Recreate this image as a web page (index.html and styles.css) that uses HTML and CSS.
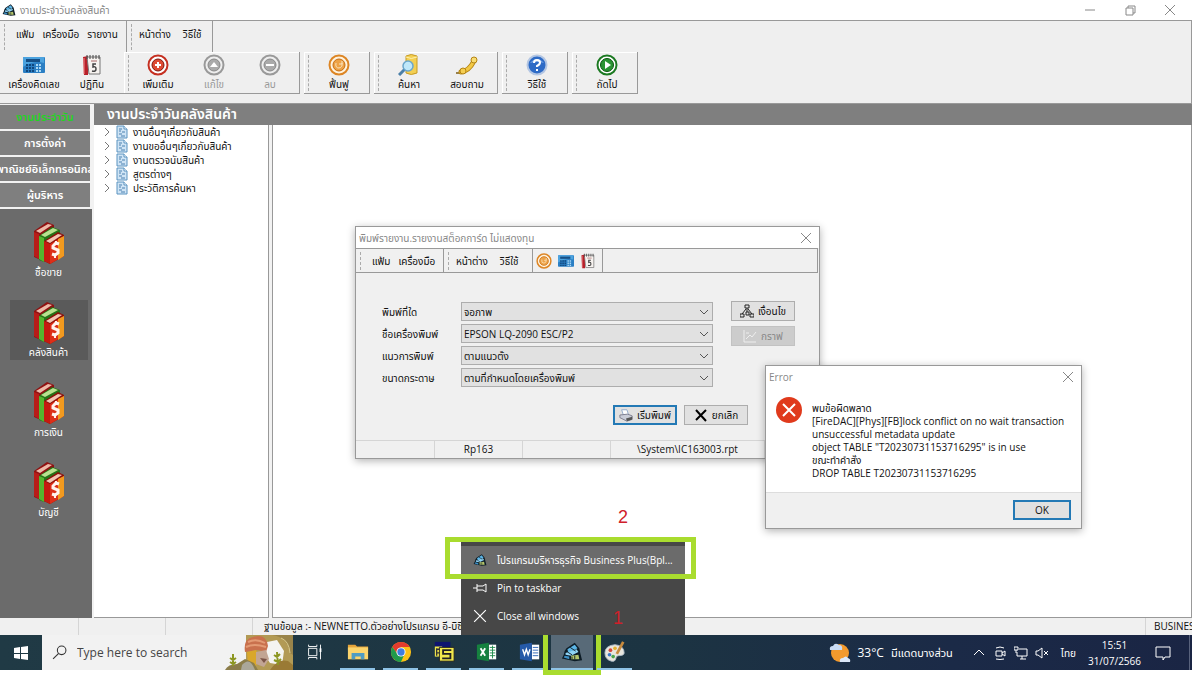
FILE: index.html
```html
<!DOCTYPE html>
<html lang="th">
<head>
    <meta charset="UTF-8">
    <meta name="viewport" content="width=device-width, initial-scale=1.0">
    <title>งานประจำวันคลังสินค้า</title>
    <link rel="stylesheet" href="styles.css">
</head>
<body>
    <!-- Shared icons -->
    <svg class="symbols" aria-hidden="true">
        <symbol id="i-app" viewBox="0 0 24 24">
            <path d="M6 8L15 2l5 6 1 5 2 8-8 1-14-3 2-4 1-4z" fill="#0d1c26"/>
            <path d="M7 9l8-5 3 4-10 5z" fill="#5bb5e6"/>
            <path d="M5 13l3-1 9-3 2 3-8 4-6-1z" fill="#8fd3f4"/>
            <path d="M4 16l5 1v3l-6-2z" fill="#3d8fc4"/>
            <path d="M11 16l8-1 1 5h-9z" fill="#b4c56c"/>
            <path d="M10 7l6 4M12 17v3M15 16v4M7 12l5 3" stroke="#0d1c26"/>
        </symbol>
        <symbol id="i-calc" viewBox="0 0 22 18">
            <rect x="0" y="1" width="22" height="16" rx="1" fill="#2b7fc4"/>
            <path d="M0 2q0-1 1-1h20v6q-10-3-21 4z" fill="#4ca3df"/>
            <rect x="3" y="3" width="14" height="3" fill="#174f85"/>
            <path d="M3 8h2v2H3zM6 8h2v2H6zM9 8h2v2H9zM3 11h2v2H3zM6 11h2v2H6zM9 11h2v2H9zM3 14h2v2H3zM6 14h2v2H6zM9 14h2v2H9z" fill="#10477d"/>
            <path d="M13 8h2v2h-2zM16 8h2v2h-2zM13 11h2v2h-2zM16 11h2v2h-2zM13 14h2v2h-2zM16 14h2v2h-2z" fill="#a9d8f5"/>
        </symbol>
        <symbol id="i-cal" viewBox="0 0 20 22">
            <path d="M1 3l5-1v19H2z" fill="#b8202a"/>
            <path d="M2 4v16" stroke="#e88"/>
            <path d="M5 3h13v17H7z" fill="#f7f3f0" stroke="#777"/>
            <path d="M5 1v4M8 1v4M11 1v4M14 1v4M17 1v4" stroke="#444"/>
            <path d="M9 7h6" stroke="#a66"/>
            <path d="M14 10h-3v3q3-1 3 2t-4 2" fill="none" stroke="#444" stroke-width="1.5"/>
        </symbol>
        <symbol id="i-add" viewBox="0 0 22 22">
            <circle cx="11" cy="11" r="9.500" fill="#fff" stroke="#c52f20" stroke-width="2"/>
            <circle cx="11" cy="11" r="6" fill="#dd4a33" stroke="#7d160c"/>
            <path d="M11 8v6M8 11h6" stroke="#fff" stroke-width="2"/>
        </symbol>
        <symbol id="i-edit" viewBox="0 0 22 22">
            <circle cx="11" cy="11" r="9.500" fill="#eee" stroke="#999" stroke-width="2"/>
            <circle cx="11" cy="11" r="6" fill="#aaa" stroke="#888"/>
            <path d="M7 13l4-5 4 5z" fill="#fff"/>
        </symbol>
        <symbol id="i-del" viewBox="0 0 22 22">
            <circle cx="11" cy="11" r="9.500" fill="#eee" stroke="#999" stroke-width="2"/>
            <circle cx="11" cy="11" r="6" fill="#aaa" stroke="#888"/>
            <path d="M7 11h8" stroke="#fff" stroke-width="2"/>
        </symbol>
        <symbol id="i-refresh" viewBox="0 0 22 22">
            <circle cx="11" cy="11" r="9.500" fill="#fff3dd" stroke="#dd8524" stroke-width="2"/>
            <circle cx="11" cy="11" r="6" fill="#eda246" stroke="#c76c12"/>
            <path d="M8 9q-1 5 3 5 4-1 3-5M14 7v3h-3" fill="none" stroke="#fbe3bd" stroke-width="1"/>
        </symbol>
        <symbol id="i-find" viewBox="0 0 22 22">
            <path d="M8 2q5-3 11 0v17q-6 3-11 0z" fill="#f3cf52" stroke="#c79b25"/>
            <path d="M8 3q5 3 11 0" fill="none" stroke="#fdf0b0"/>
            <path d="M1 21l6-6" stroke="#4a7fa8" stroke-width="3"/>
            <circle cx="10" cy="12" r="5" fill="#bfe8fa" stroke="#6aa6cc" stroke-width="1.5"/>
        </symbol>
        <symbol id="i-phone" viewBox="0 0 22 22">
            <path d="M0 19h5" fill="none" stroke="#7c5c14" stroke-width="1.5"/>
            <path d="M5 18q8-1 13-11" fill="none" stroke="#b48413" stroke-width="5" stroke-linecap="round"/>
            <path d="M5 18q8-1 13-11" fill="none" stroke="#f2c844" stroke-width="3" stroke-linecap="round"/>
            <circle cx="18" cy="6" r="3" fill="#f8dc72" stroke="#b48413"/>
            <circle cx="7" cy="17" r="3" fill="#f4ce52" stroke="#b48413"/>
        </symbol>
        <symbol id="i-help" viewBox="0 0 22 22">
            <circle cx="11" cy="11" r="9.500" fill="#2e6bc6" stroke="#b3c6e3" stroke-width="2"/>
            <path d="M4 9q7-8 14 0-7-2-14 0z" fill="#6fa0e4"/>
            <path d="M8 9q0-3 3-3t3 2.500q0 2-3 3.500v1M11 15v2" fill="none" stroke="#fff" stroke-width="2"/>
        </symbol>
        <symbol id="i-next" viewBox="0 0 22 22">
            <circle cx="11" cy="11" r="9.500" fill="#fff" stroke="#1c7a22" stroke-width="2"/>
            <circle cx="11" cy="11" r="6.500" fill="#2b9433" stroke="#0a5510"/>
            <path d="M9 7l6 4-6 4z" fill="#fff"/>
        </symbol>
        <symbol id="i-books" viewBox="0 0 32 42">
            <path d="M1 9L14 0l7 3v8L8 38l-7-3z" fill="#8e1212"/>
            <path d="M1 10l5 2v25l-5-3z" fill="#b81c18"/>
            <path d="M3 9l12-7 4 1L7 11z" fill="#eeb9a8"/>
            <path d="M6 14l13-9 8 3v8L11 40l-5-2z" fill="#257317"/>
            <path d="M6 14l5 2v24l-5-3z" fill="#55b52e"/>
            <path d="M8 13l12-7 5 2-13 7z" fill="#b8e18f"/>
            <path d="M11 19l14-9 6 3v21l-14 8-6-3z" fill="#8a1009"/>
            <path d="M11 19l6 3v20l-6-3z" fill="#c51a10"/>
            <path d="M13 19l12-7 4 1-12 8z" fill="#f4c4b2"/>
            <path d="M17 22l14-8v20l-14 8z" fill="#dc2f18"/>
            <path d="M25 17l6-3v20l-6 4z" fill="#f29a1f"/>
            <path d="M26 22l-3-1-3 3v2l5 2v3l-3 2-3-1" fill="none" stroke="#fff4ee" stroke-width="3"/>
            <path d="M23 19v3M22 33v3" stroke="#fff4ee" stroke-width="2"/>
        </symbol>
        <symbol id="i-doc" viewBox="0 0 12 14">
            <path d="M1 1h7l3 3v9H1z" fill="#cfe4f5" stroke="#5b93c0"/>
            <path d="M8 1v3h3" fill="#fff" stroke="#5b93c0"/>
            <path d="M3 4h3M3 6h2M6 7h3M3 9h3M5 11h4" stroke="#4a80b0"/>
        </symbol>
        <symbol id="i-x" viewBox="0 0 12 12">
            <path d="M1 1l10 10M11 1L1 11" stroke="currentColor" fill="none"/>
        </symbol>
        <symbol id="i-down" viewBox="0 0 10 6">
            <path d="M1 1l4 4 4-4" stroke="currentColor" fill="none"/>
        </symbol>
    </svg>

    <div class="desktop">
        <header class="titlebar">
            <svg class="titlebar-icon"><use href="#i-app"/></svg>
            <span class="titlebar-text">งานประจำวันคลังสินค้า</span>
            <div class="window-controls">
                <button aria-label="Minimize"><svg viewBox="0 0 12 12"><path d="M1 6h10" stroke="currentColor"/></svg></button>
                <button aria-label="Restore"><svg viewBox="0 0 12 12"><path d="M2 4h7v7H2zM4 4V2h7v7H9" stroke="currentColor" fill="none"/></svg></button>
                <button aria-label="Close"><svg><use href="#i-x"/></svg></button>
            </div>
        </header>

        <div class="toolbars">
            <nav class="menu-row">
                <div class="menu-group">
                    <button>แฟ้ม</button>
                    <button>เครื่องมือ</button>
                    <button>รายงาน</button>
                </div>
                <div class="menu-group">
                    <button>หน้าต่าง</button>
                    <button>วิธีใช้</button>
                </div>
            </nav>
            <div class="tool-row">
                <div class="tool-group tool-group-first">
                    <button><svg><use href="#i-calc"/></svg>เครื่องคิดเลข</button>
                    <button><svg><use href="#i-cal"/></svg>ปฏิทิน</button>
                </div>
                <div class="tool-group tool-group-edit">
                    <button><svg><use href="#i-add"/></svg>เพิ่มเติม</button>
                    <button disabled><svg><use href="#i-edit"/></svg>แก้ไข</button>
                    <button disabled><svg><use href="#i-del"/></svg>ลบ</button>
                </div>
                <div class="tool-group">
                    <button><svg><use href="#i-refresh"/></svg>ฟื้นฟู</button>
                </div>
                <div class="tool-group">
                    <button><svg><use href="#i-find"/></svg>ค้นหา</button>
                    <button><svg><use href="#i-phone"/></svg>สอบถาม</button>
                </div>
                <div class="tool-group">
                    <button><svg><use href="#i-help"/></svg>วิธีใช้</button>
                </div>
                <div class="tool-group">
                    <button><svg><use href="#i-next"/></svg>ถัดไป</button>
                </div>
            </div>
        </div>

        <div class="workspace">
            <aside class="sidebar">
                <button class="side-tab active">งานประจำวัน</button>
                <button class="side-tab">การตั้งค่า</button>
                <button class="side-tab"><span>พาณิชย์อิเล็กทรอนิกส์</span></button>
                <button class="side-tab">ผู้บริหาร</button>
                <div class="side-list">
                    <button class="side-item"><svg><use href="#i-books"/></svg>ซื้อขาย</button>
                    <button class="side-item selected"><svg><use href="#i-books"/></svg>คลังสินค้า</button>
                    <button class="side-item"><svg><use href="#i-books"/></svg>การเงิน</button>
                    <button class="side-item"><svg><use href="#i-books"/></svg>บัญชี</button>
                </div>
            </aside>
            <main class="main">
                <h1 class="main-title">งานประจำวันคลังสินค้า</h1>
                <div class="panes">
                    <ul class="tree">
                        <li><svg class="arrow"><use href="#i-down"/></svg><svg class="doc"><use href="#i-doc"/></svg>งานอื่นๆเกี่ยวกับสินค้า</li>
                        <li><svg class="arrow"><use href="#i-down"/></svg><svg class="doc"><use href="#i-doc"/></svg>งานขออื่นๆเกี่ยวกับสินค้า</li>
                        <li><svg class="arrow"><use href="#i-down"/></svg><svg class="doc"><use href="#i-doc"/></svg>งานตรวจนับสินค้า</li>
                        <li><svg class="arrow"><use href="#i-down"/></svg><svg class="doc"><use href="#i-doc"/></svg>สูตรต่างๆ</li>
                        <li><svg class="arrow"><use href="#i-down"/></svg><svg class="doc"><use href="#i-doc"/></svg>ประวัติการค้นหา</li>
                    </ul>
                    <div class="content"></div>
                </div>
            </main>
        </div>

        <footer class="statusbar">
            <span class="cell"></span>
            <span class="cell"></span>
            <span class="cell"></span>
            <span class="cell cell-db">ฐานข้อมูล :- NEWNETTO.ตัวอย่างโปรแกรม อี-บิซิ</span>
            <span class="cell cell-name">BUSINESS</span>
        </footer>

        <div class="taskbar">
            <button class="start" aria-label="Start">
                <svg viewBox="0 0 14 14"><path d="M0 2l6-1v6H0zM7 1l7-1v7H7zM0 8h6v5l-6-1zM7 8h7v6l-7-1z" fill="#fff"/></svg>
            </button>
            <label class="search">
                <svg class="search-icon" viewBox="0 0 14 14"><circle cx="9" cy="5" r="4" fill="none" stroke="#333"/><path d="M6 8l-5 5" stroke="#333"/></svg>
                <input type="text" placeholder="Type here to search" aria-label="Type here to search">
                <svg class="search-art" viewBox="0 0 68 35">
                    <path d="M21 35V0h47v35z" fill="#b29a55"/>
                    <path d="M0 35h21V0H0z" fill="#f2f2f2"/>
                    <path d="M42 7l10-2 7 11-2 14-12-2-8-12z" fill="#f4f4f1"/>
                    <path d="M47 0q16 2 18 18l3 2V0z" fill="#99844a"/>
                    <path d="M56 3q8 3 9 15" stroke="#d8c98c" fill="none"/>
                    <path d="M20 17Q18 4 28 2q13-4 15 9l-2 6-8-2z" fill="#c9714d"/>
                    <path d="M23 7q8-4 17 1M21 12q8-4 20 0" stroke="#e39b74" fill="none" stroke-width="2"/>
                    <path d="M22 17l9-2 4 7-4 9-8-2z" fill="#d9a72b"/>
                    <path d="M31 17l10-2 3 9-5 8-8-3z" fill="#c2a593"/>
                    <path d="M35 23l7 1-3 4z" fill="#7b5548"/>
                    <path d="M0 35q3-6 12-6l8-5 9 4 4 7z" fill="#8b7d4a"/>
                    <path d="M17 30q8-9 13 5H16z" fill="#aaa799"/>
                    <path d="M45 35q8-12 18-9l5 4v5z" fill="#9a7a35"/>
                    <path d="M8 31V19M5 23l3 2 3-2M5 27l3 2 3-2M53 30l-1-13M49 20l3 2 3-3M49 25l4 2 3-3" stroke="#8d9722" stroke-width="2" fill="none"/>
                </svg>
            </label>
            <div class="tasks">
                <button aria-label="Task View">
                    <svg viewBox="0 0 24 24"><path d="M5 8h9v8H5zM5 4v2h9V4M5 20v-2h9v2M18 4v16" fill="none" stroke="#fff"/><path d="M17 8h2v4h-2z" fill="#fff"/></svg>
                </button>
                <button class="running" aria-label="File Explorer">
                    <svg viewBox="0 0 24 24"><path d="M1 4h8l2 2h12v4H1z" fill="#e5a43a"/><path d="M1 7h22v13H1z" fill="#fbd46c"/><path d="M5 20v-7h14v7h-4v-3H9v3z" fill="#4f9cc3"/></svg>
                </button>
                <button class="running" aria-label="Google Chrome">
                    <svg viewBox="0 0 24 24"><circle cx="12" cy="12" r="11" fill="#fbc116"/><path d="M2.500 6.500A11 11 0 0 1 21.500 6.500H12l-4 7.500z" fill="#e33b2e"/><path d="M2.500 6.500A11 11 0 0 0 12 23l4-9H8z" fill="#219a4c"/><circle cx="12" cy="12" r="5" fill="#fff"/><circle cx="12" cy="12" r="4" fill="#3f7de0"/></svg>
                </button>
                <button class="running" aria-label="Server">
                    <svg viewBox="0 0 24 24"><path d="M2 1h17v6H2z" fill="#0e1470"/><path d="M2 6h8v11H2z" fill="#f1e84c"/><path d="M4 9h4M4 13h4M4 8v8" stroke="#333" stroke-width="1.500"/><path d="M7 7h16v15H7z" fill="#f1e84c" stroke="#222"/><path d="M20 10h-9v4h8v5h-9" fill="none" stroke="#222" stroke-width="2"/></svg>
                </button>
                <button class="running" aria-label="Excel">
                    <svg viewBox="0 0 24 24"><path d="M14 4h8v16h-8z" fill="#fff"/><path d="M15 7h6M15 10h6M15 13h6M15 16h6M18 5v14" stroke="#1d8a4b"/><path d="M1 4l13-2v20L1 20z" fill="#16813f"/><path d="M5 8l5 8M10 8l-5 8" stroke="#fff" stroke-width="2"/></svg>
                </button>
                <button class="running" aria-label="Word">
                    <svg viewBox="0 0 24 24"><path d="M14 4h8v16h-8z" fill="#fff"/><path d="M15 7h6M15 10h6M15 13h6M15 16h6" stroke="#2a62b4"/><path d="M1 4l13-2v20L1 20z" fill="#255aa8"/><path d="M4 9l2 6 2-6 2 6 2-6" stroke="#fff" stroke-width="1.500" fill="none"/></svg>
                </button>
                <button class="current" aria-label="Business Plus">
                    <svg><use href="#i-app"/></svg>
                    <span class="mark"></span>
                </button>
                <button class="running" aria-label="Paint">
                    <svg viewBox="0 0 24 24"><path d="M1 13Q1 5 12 4q10 1 10 9 0 3-6 3-3 0-3 3-1 4-5 3-7-2-7-9z" fill="#e9e6de" stroke="#a9b7c4"/><circle cx="7" cy="10" r="2" fill="#d4473b"/><circle cx="12" cy="8" r="2" fill="#e4b233"/><circle cx="6" cy="15" r="2" fill="#3c78c8"/><circle cx="10" cy="17" r="2" fill="#4ca64c"/><path d="M21 1l-7 13" stroke="#c78a3d" stroke-width="3"/></svg>
                </button>
            </div>
            <div class="tray">
                <svg class="weather" viewBox="0 0 22 22"><circle cx="11" cy="11" r="9" fill="#f39a2d"/><path d="M1 8q-1-4 3-4 2-4 6-1 4 0 3 5z" fill="#c9dcf5"/><path d="M11 20q-1-4 3-4 3-3 5 0 3 1 2 4z" fill="#dce8f8"/></svg>
                <span class="temp">33°C</span>
                <span class="forecast">มีแดดบางส่วน</span>
                <svg class="tray-icon" viewBox="0 0 14 14"><path d="M2 9l5-5 5 5" fill="none" stroke="#fff"/></svg>
                <svg class="tray-icon" viewBox="0 0 14 14"><path d="M3 5h6v5H3zM9 7l3-2v5l-3-2M3 2q4-2 8 0M3 13q4 1 8 0" fill="none" stroke="#fff"/></svg>
                <svg class="tray-icon" viewBox="0 0 14 14"><path d="M5 3h8v7H3V6M6 13h6M8 10v3M0 1h4v3H0zM2 4v3" fill="none" stroke="#fff"/></svg>
                <svg class="tray-icon" viewBox="0 0 14 14"><path d="M1 5h2l4-3v10L3 9H1zM9 5l4 4M13 5L9 9" fill="none" stroke="#fff"/></svg>
                <span class="lang">ไทย</span>
                <span class="clock">15:51<br>31/07/2566</span>
                <svg class="notify" viewBox="0 0 16 16"><path d="M1 2h14v10h-5l-2 3v-3H1z" fill="none" stroke="#fff"/></svg>
            </div>
        </div>

        <!-- Report printing window -->
        <section class="window print-window">
            <div class="window-title">
                <span>พิมพ์รายงาน.รายงานสต็อกการ์ด ไม่แสดงทุน</span>
                <button class="close" aria-label="Close"><svg><use href="#i-x"/></svg></button>
            </div>
            <nav class="print-menu">
                <div class="print-group"><button>แฟ้ม</button><button>เครื่องมือ</button></div>
                <div class="print-group"><button>หน้าต่าง</button><button>วิธีใช้</button></div>
                <div class="print-icons">
                    <button aria-label="Refresh"><svg><use href="#i-refresh"/></svg></button>
                    <button aria-label="Calculator"><svg><use href="#i-calc"/></svg></button>
                    <button aria-label="Calendar"><svg><use href="#i-cal"/></svg></button>
                </div>
            </nav>
            <form class="print-form">
                <div class="fields">
                    <label for="target">พิมพ์ที่ใด</label>
                    <div class="select"><select id="target"><option>จอภาพ</option></select><svg><use href="#i-down"/></svg></div>
                    <label for="printer">ชื่อเครื่องพิมพ์</label>
                    <div class="select"><select id="printer"><option>EPSON LQ-2090 ESC/P2</option></select><svg><use href="#i-down"/></svg></div>
                    <label for="orient">แนวการพิมพ์</label>
                    <div class="select"><select id="orient"><option>ตามแนวตั้ง</option></select><svg><use href="#i-down"/></svg></div>
                    <label for="paper">ขนาดกระดาษ</label>
                    <div class="select"><select id="paper"><option>ตามที่กำหนดโดยเครื่องพิมพ์</option></select><svg><use href="#i-down"/></svg></div>
                </div>
                <div class="side-buttons">
                    <button type="button" class="btn">
                        <svg viewBox="0 0 14 14"><path d="M5 1h4v3H5zM0 10h4v3H0zM10 10h4v3h-4zM6 8h3v3H6zM7 4v4M6 5L2 10M8 5l4 5" fill="none" stroke="#222"/></svg>เงื่อนไข
                    </button>
                    <button type="button" class="btn" disabled>
                        <svg viewBox="0 0 14 14"><path d="M1 1v12h12M3 10l4-4 2 2 4-5M3 4h3" fill="none" stroke="#eee"/></svg>กราฟ
                    </button>
                </div>
                <div class="actions">
                    <button type="button" class="btn primary">
                        <svg viewBox="0 0 16 14"><path d="M3 1h6l2 6H5z" fill="#fff" stroke="#8aa6c8"/><path d="M1 7l9-1 5 2v4l-6 2-8-4z" fill="#c9cdd8" stroke="#778"/><path d="M8 11l7-2v3l-6 2z" fill="#555"/></svg>เริ่มพิมพ์
                    </button>
                    <button type="button" class="btn">
                        <svg viewBox="0 0 14 14"><path d="M2 2l10 11M12 2L2 12" stroke="#000" stroke-width="2"/></svg>ยกเลิก
                    </button>
                </div>
            </form>
            <div class="print-status">
                <span></span><span>Rp163</span><span></span><span>\System\IC163003.rpt</span><span></span>
            </div>
        </section>

        <!-- Error message -->
        <section class="window error-window" role="alertdialog">
            <div class="window-title">
                <span>Error</span>
                <button class="close" aria-label="Close"><svg><use href="#i-x"/></svg></button>
            </div>
            <div class="error-body">
                <svg viewBox="0 0 26 26"><circle cx="13" cy="13" r="13" fill="#e03a1c"/><path d="M7 7l12 12M19 7L7 19" stroke="#fff" stroke-width="2"/></svg>
                <p>พบข้อผิดพลาด<br>[FireDAC][Phys][FB]lock conflict on no wait transaction<br>unsuccessful metadata update<br>object TABLE "T20230731153716295" is in use<br>ขณะทำคำสั่ง<br>DROP TABLE T20230731153716295</p>
            </div>
            <div class="error-footer"><button class="btn primary">OK</button></div>
        </section>

        <!-- Jump list of the running program -->
        <div class="jump-list">
            <button class="hover"><svg><use href="#i-app"/></svg>โปรแกรมบริหารธุรกิจ Business Plus(Bpl...</button>
            <button><svg viewBox="0 0 14 14"><path d="M0 7h4M4 3v8M4 5h6l3-2v8l-3-2H4" fill="none" stroke="#fff"/></svg>Pin to taskbar</button>
            <button><svg><use href="#i-x"/></svg>Close all windows</button>
            <span class="mark"></span>
            <span class="step step-one">1</span>
            <span class="step step-two">2</span>
        </div>
    </div>
</body>
</html>
```
FILE: styles.css
```css
* {
    box-sizing: border-box;
}
body {
    margin: 0;
    padding: 0 9px 28px 0;
    background: #fff;
    color: #111;
    font-family: "Open Sans", "Noto Sans", "Noto Sans Thai", sans-serif;
    font-size: 10px;
    line-height: 14px;
}
button, input, select {
    font: inherit;
    color: inherit;
}
button {
    padding: 0;
    border: 0;
    background: none;
    white-space: nowrap;
}
svg {
    flex: none;
    display: block;
}
.symbols {
    position: absolute;
    width: 0;
    height: 0;
}
.desktop {
    position: relative;
    display: flex;
    flex-direction: column;
    height: calc(100vh - 28px);
    min-height: 560px;
}

/* Main window */
.titlebar {
    display: flex;
    align-items: center;
    height: 20px;
    padding: 0 16px 0 2px;
    color: #888;
}
.titlebar-icon {
    width: 14px;
    height: 14px;
}
.titlebar-text {
    margin-left: 4px;
}
.window-controls {
    display: flex;
    gap: 28px;
    margin-left: auto;
}
.window-controls svg {
    width: 12px;
    height: 12px;
}
.toolbars {
    height: 84px;
    border: 1px solid #999;
    border-left: 0;
    background: #efefef;
}
.menu-row {
    display: flex;
    height: 31px;
}
.menu-group {
    display: flex;
    align-items: center;
    gap: 8px;
    padding: 0 8px 6px 16px;
    border-right: 1px solid #999;
    position: relative;
}
.menu-group:first-child {
    width: 127px;
}
.menu-group:last-child {
    width: 86px;
    gap: 12px;
    padding-left: 12px;
}
.menu-group::before, .tool-group::before, .print-group::before {
    content: "";
    position: absolute;
    left: 4px;
    top: 3px;
    bottom: 2px;
    border-left: 1px dashed #aaa;
}
.tool-row {
    display: flex;
    gap: 4px;
    height: 42px;
}
.tool-group {
    position: relative;
    display: flex;
    padding: 0 1px 0 6px;
    border-right: 1px solid #999;
    border-bottom: 1px solid #999;
    box-shadow: inset 1px 1px #fff;
}
.tool-group-first {
    padding: 0 3px 0 5px;
    margin-right: -5px;
    box-shadow: none;
}
.tool-group-first::before {
    display: none;
}
.tool-group button {
    display: flex;
    flex-direction: column;
    align-items: center;
    justify-content: flex-end;
    gap: 1px;
    width: 58px;
    padding-bottom: 2px;
}
.tool-group-edit button {
    width: 56px;
}
.tool-group button:disabled {
    color: #999;
}
.tool-group svg {
    width: 22px;
    height: 22px;
}
.workspace {
    flex: 1;
    display: flex;
    gap: 2px;
    min-height: 0;
    background: #f2f2f2;
}
.sidebar {
    display: flex;
    flex-direction: column;
    gap: 2px;
    width: 92px;
    padding-top: 1px;
}
.side-tab {
    height: 24px;
    margin-right: 2px;
    display: flex;
    align-items: center;
    justify-content: center;
    overflow: hidden;
    background: #7f7f7f;
    color: #fff;
    font-size: 11px;
    font-weight: 600;
}
.side-tab.active {
    color: #1fd51f;
}
.side-list {
    flex: 1;
    display: flex;
    flex-direction: column;
    align-items: center;
    gap: 20px;
    padding: 11px 0 0 5px;
    background: #6b6b6b;
    color: #fff;
}
.side-item {
    display: flex;
    flex-direction: column;
    align-items: center;
    width: 78px;
    height: 60px;
    padding-top: 2px;
    gap: 1px;
}
.side-item.selected {
    background: #5a5a5a;
}
.side-item svg {
    width: 32px;
    height: 42px;
}
.main {
    flex: 1;
    display: flex;
    flex-direction: column;
    min-width: 0;
}
.main-title {
    height: 21px;
    margin: 0;
    padding-left: 13px;
    background: #7f7f7f;
    color: #fff;
    font-size: 14px;
    font-weight: 600;
    line-height: 20px;
}
.panes {
    flex: 1;
    display: flex;
    gap: 3px;
}
.tree {
    width: 175px;
    margin: 0;
    padding: 0 0 0 8px;
    list-style: none;
    background: #fff;
    border: solid #999;
    border-width: 0 1px 1px 0;
}
.tree li {
    display: flex;
    align-items: center;
    height: 14px;
}
.tree .arrow {
    width: 10px;
    height: 6px;
    color: #777;
    transform: rotate(-90deg);
}
.tree .doc {
    width: 12px;
    height: 14px;
    margin: 0 5px 0 4px;
}
.content {
    flex: 1;
    background: #fff;
    border: solid #999;
    border-width: 0 1px 1px 1px;
}
.statusbar {
    display: flex;
    height: 17px;
    overflow: hidden;
    background: #f0f0f0;
    line-height: 17px;
    white-space: nowrap;
}
.cell {
    flex: 0 0 87px;
    border-right: 1px solid #d5d5d5;
}
.cell:first-child {
    flex-basis: 79px;
}
.cell-db {
    flex: 1;
    padding-left: 11px;
}
.cell-name {
    flex: 0 0 46px;
    min-width: 0;
    padding-left: 8px;
    border: 0;
    overflow: hidden;
}

/* Taskbar */
.taskbar {
    display: flex;
    height: 35px;
    background: linear-gradient(90deg, #203a45 0%, #1c3442 55%, #1b2a47 80%, #1a2544 100%);
    color: #fff;
}
.start {
    width: 42px;
}
.start svg {
    width: 14px;
    height: 14px;
    margin: auto;
}
.search {
    display: flex;
    align-items: center;
    width: 251px;
    padding-left: 10px;
    background: #f2f2f2;
}
.search-icon {
    width: 15px;
    height: 15px;
}
.search input {
    flex: 1;
    min-width: 0;
    margin-left: 10px;
    padding: 0;
    border: 0;
    background: none;
    color: #444;
    font-size: 12px;
}
.search input::placeholder {
    color: #444;
}
.search-art {
    width: 68px;
    height: 35px;
}
.tasks {
    display: flex;
    gap: 8px;
    padding-left: 4px;
}
.tasks button {
    position: relative;
    display: flex;
    align-items: center;
    justify-content: center;
    width: 35px;
    border-bottom: 2px solid transparent;
}
.tasks .running {
    border-color: #8fc3e6;
}
.tasks button.current {
    width: 42px;
    margin: 0 -4px;
    background: #586a78;
    border-color: #8fc3e6;
}
.tasks svg {
    width: 22px;
    height: 22px;
}
.tray {
    display: flex;
    align-items: center;
    gap: 7px;
    margin-left: auto;
    padding-right: 18px;
    border-right: 1px solid #58627c;
    margin-right: 2px;
    white-space: nowrap;
}
.weather {
    width: 22px;
    height: 22px;
}
.temp {
    font-size: 12px;
}
.forecast {
    margin-right: 12px;
    font-size: 11px;
}
.tray-icon {
    width: 14px;
    height: 14px;
}
.lang {
    margin-left: 5px;
}
.clock {
    margin: 0 7px 0 5px;
    line-height: 16px;
    text-align: center;
}
.notify {
    width: 16px;
    height: 16px;
}

/* Floating windows */
.window {
    position: absolute;
    background: #f0f0f0;
    border: 1px solid #999;
    box-shadow: 0 2px 8px rgba(0, 0, 0, 0.3);
}
.window-title {
    display: flex;
    justify-content: space-between;
    align-items: center;
    height: 21px;
    padding: 0 7px 0 3px;
    background: #fff;
    color: #888;
}
.close svg {
    width: 12px;
    height: 12px;
}
.btn {
    display: flex;
    align-items: center;
    justify-content: center;
    gap: 4px;
    width: 64px;
    height: 20px;
    background: #e1e1e1;
    border: 1px solid #adadad;
}
.btn:disabled {
    background: #ccc;
    border-color: #c2c2c2;
    color: #888;
}
.btn.primary {
    border: 2px solid #2379b5;
}
.btn svg {
    width: 14px;
    height: 14px;
}
.print-window {
    left: 355px;
    top: 226px;
    width: 465px;
}
.print-menu {
    display: flex;
    height: 25px;
    margin-right: 1px;
    border: 1px solid #999;
    border-left: 0;
}
.print-group {
    position: relative;
    display: flex;
    align-items: center;
    gap: 8px;
    width: 88px;
    padding-left: 16px;
    border-right: 1px solid #999;
}
.print-group + .print-group {
    width: 89px;
    padding-left: 12px;
    gap: 12px;
}
.print-icons {
    display: flex;
    align-items: center;
    gap: 6px;
    width: 70px;
    padding-left: 3px;
    border-right: 1px solid #999;
}
.print-icons svg {
    width: 16px;
    height: 16px;
}
.print-form {
    display: grid;
    grid-template-columns: 331px 64px;
    column-gap: 18px;
    padding: 28px 0 15px 26px;
}
.fields {
    display: grid;
    grid-template-columns: 79px 1fr;
    row-gap: 3px;
    align-items: center;
    padding-top: 1px;
    padding-bottom: 1px;
}
.select {
    position: relative;
}
.select select {
    display: block;
    width: 100%;
    height: 19px;
    padding: 0 2px;
    appearance: none;
    background: #e1e1e1;
    border: 1px solid #adadad;
    border-radius: 0;
}
.select svg {
    position: absolute;
    right: 4px;
    top: 7px;
    width: 10px;
    height: 6px;
    color: #555;
    pointer-events: none;
}
.side-buttons {
    display: flex;
    flex-direction: column;
    gap: 5px;
}
.actions {
    grid-column: 1 / -1;
    display: flex;
    gap: 7px;
    margin: 17px 0 0 231px;
}
.print-status {
    display: flex;
    height: 18px;
    border-top: 1px solid #d5d5d5;
    line-height: 17px;
}
.print-status span {
    width: 88px;
    border-right: 1px solid #d5d5d5;
    text-align: center;
}
.print-status span:first-child {
    width: 79px;
}
.print-status span:nth-child(4) {
    width: 154px;
}
.print-status span:last-child {
    flex: 1;
    border: 0;
}
.error-window {
    left: 765px;
    top: 365px;
    width: 317px;
    background: #fff;
}
.error-body {
    display: flex;
    gap: 10px;
    padding: 10px 10px 12px;
}
.error-body svg {
    width: 26px;
    height: 26px;
}
.error-body p {
    margin: 5px 0 0;
    line-height: 13px;
    white-space: nowrap;
}
.error-footer {
    display: flex;
    justify-content: flex-end;
    padding: 7px 10px 8px;
    background: #f0f0f0;
    border-top: 1px solid #ddd;
}
.error-footer .btn {
    width: 58px;
}

/* Jump list and step marks */
.jump-list {
    position: absolute;
    left: 461px;
    bottom: 35px;
    width: 224px;
    padding: 4px 0 5px;
    background: #474747;
    color: #fff;
}
.jump-list button {
    display: flex;
    align-items: center;
    gap: 10px;
    width: 100%;
    height: 28px;
    padding-left: 12px;
}
.jump-list .hover {
    background: #6b6b6b;
}
.jump-list svg {
    width: 14px;
    height: 14px;
}
.mark {
    position: absolute;
    inset: -8px -8px -7px;
    border: 5px solid #a9dc2f;
}
.jump-list .mark {
    inset: -5px -11px auto -16px;
    height: 42px;
}
.step {
    position: absolute;
    color: #d0202a;
    font-family: "Liberation Sans", sans-serif;
    font-size: 18px;
}
.step-one {
    right: 62px;
    bottom: 10px;
}
.step-two {
    right: 57px;
    top: -32px;
}
```
